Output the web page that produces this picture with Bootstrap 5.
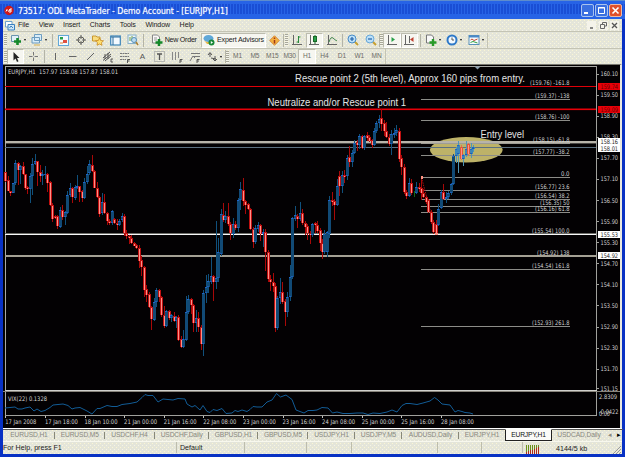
<!DOCTYPE html>
<html lang="en">
<head>
  <meta charset="utf-8">
  <meta name="viewport" content="width=device-width, initial-scale=1">
  <title>ODL MetaTrader</title>
  <link href="https://cdn.jsdelivr.net/npm/bootstrap@5.3.2/dist/css/bootstrap.min.css" rel="stylesheet">
  <style>
    body {
      width: 625px;
      height: 457px;
      overflow: hidden;
      font-family: "Liberation Sans", Arial, sans-serif;
      font-size: 7.1px;
      line-height: 1;
      color: #222;
    }
    svg { display: block; flex: none; }
    .app-window { width: 625px; height: 457px; background: #0831c4; padding: 0 3px 3px; }
    .face {
      background-color: #e4e5d9;
      background-image: radial-gradient(circle at 1.5px 1.5px, #fbf6d2 .6px, transparent .8px), radial-gradient(circle at 3.5px 3.5px, #f6f4e6 .6px, transparent .8px);
      background-size: 4px 4px;
    }

    /* title bar */
    .title-bar {
      height: 19px;
      margin: 0 -3px;
      padding: 2px 3px 0 4px;
      background-color: #2763e6;
      background-image: linear-gradient(#2763e6 3px, transparent 3px, transparent 13px, #2763e6 13px), radial-gradient(circle at 1px 1px, #1243cc .6px, transparent .9px);
      background-size: 100% 100%, 3px 2px;
      border-top: 1px solid #5e8ccc;
      color: #fff;
    }
    .app-name { font: 8.7px "DejaVu Sans Condensed", "DejaVu Sans", sans-serif; text-shadow: 0 0 1px #b8ccf8; letter-spacing: -.06px; margin-left: 4px; white-space: nowrap; }
    .win-btn { width: 13px; height: 13px; border: 1px solid #a9c3ee; border-radius: 2px; background: #3a6fe0; margin-left: 1px; }
    .win-close { background: #e0502a; border-color: #f0b8a0; }

    .menu-row { height: 13px; padding: 0 3px 0 2px; }
    .menu-row .items { gap: 9.6px; margin-left: 3px; }
    .menu-row .items span { letter-spacing: -.1px; }
    .mdi-btn { width: 9px; height: 9px; margin-left: 2.5px; background: #f4f3ea; }

    /* toolbars */
    .tool-row { height: 17px; border-top: 1px solid #c4c4b4; padding-left: 1px; }
    .tool-row.charts { height: 16px; }
    .tool { display: flex; align-items: center; justify-content: center; width: 17.4px; height: 15px; flex: none; white-space: nowrap; }
    .tool.drop { width: 21.5px; gap: 2px; }
    .tool.drop::after { content: ""; border: 1.5px solid transparent; border-top: 2px solid #111; border-bottom: 0; }
    .tool.on { background: #f6f6f0; border: 1px solid #bcbcae; border-right-color: #fff; border-bottom-color: #fff; }
    .tool.order { width: 48px; gap: 1.5px; margin: 0 3px 0 4px; letter-spacing: -.25px; }
    .tool.advisor { width: 65px; gap: 2px; letter-spacing: -.15px; }
    .grip { width: 3px; height: 12px; flex: none; background: repeating-linear-gradient(#a8a898 0 1px, #f4f4ea 1px 2px); }
    .rule { width: 1px; height: 13px; flex: none; background: #b4b4a6; }
    .rule.gap-even { margin: 0 2px; }
    .rule.gap-slim { margin: 0 1.5px; }
    .tf .tool { color: #6c6c66; font-size: 6.6px; letter-spacing: -.1px; }
    .end-rule { width: 1px; height: 15px; background: #c4c4b4; }

    /* chart */
    .chart-area { width: 619px; height: 364px; background: #030103; border-top: 1px solid #77766e; border-right: 2px solid #e8e8e0; }
    .chart-area text { font-family: "DejaVu Sans Condensed", "DejaVu Sans", sans-serif; font-size: 6.3px; fill: #d4d4d4; }
    .chart-area .note { font-family: "Liberation Sans", Arial, sans-serif; font-size: 10px; fill: #e4e4e4; }

    /* chart tabs */
    .chart-tabs { height: 13px; border-top: 1px solid #fff; flex-wrap: nowrap; color: #88887e; }
    .chart-tabs .tab-cell { flex: none; height: 12px; display: flex; align-items: center; justify-content: center; position: relative; font-size: 6.7px; letter-spacing: -.14px; border-top: 1px solid #555; }
    .tab-cell::after { content: ""; position: absolute; right: 0; top: 2px; height: 7px; width: 1px; background: #888878; }
    .tab-cell.current { background: #fbfbf8; color: #111; border: 1px solid #222; border-top-color: #fbfbf8; }
    .tab-cell.current::after, .tab-cell.plain::after { display: none; }
    .status { height: 13px; border-top: 1px solid #f8f8ee; }
    .status .pane { border-left: 1px solid #bdbdac; height: 11px; flex: none; padding: 3px 0 0 3px; }
    .status .pane:first-child { font-size: 7.1px; }
  </style>
</head>
<body>
<div class="app-window d-flex flex-column">
  <div class="title-bar d-flex align-items-center">
    <svg width="10" height="11" viewBox="0 0 10 11"><circle cx="5" cy="5.5" r="4.7" fill="#d01818"/><path d="M2 6.5Q3 3 4 5.5T6 4V8M7 3V7" stroke="#fff" fill="none"/></svg>
    <span class="app-name">73517: ODL MetaTrader - Demo Account - [EURJPY,H1]</span>
    <div class="d-flex ms-auto">
      <div class="win-btn"><svg width="11" height="11"><path d="M2 8H6" stroke="#fff" stroke-width="2"/></svg></div>
      <div class="win-btn"><svg width="11" height="11"><path d="M2.5 2.5H8.5V8.5H2.5ZM2 3H9" stroke="#fff" fill="none"/></svg></div>
      <div class="win-btn win-close"><svg width="11" height="11"><path d="M2.5 2.5L8.5 8.5M8.5 2.5L2.5 8.5" stroke="#fff" stroke-width="1.6"/></svg></div>
    </div>
  </div>

  <div class="menu-row face d-flex align-items-center">
    <svg width="10" height="11" viewBox="0 0 10 11"><path d="M.5 1.5H7V7H.5Z" fill="#fff" stroke="#6aa0cc"/><path d="M3 4.5H9.5V10H3Z" fill="#cfe6f6" stroke="#3a80c0"/><path d="M4.500 8L6 6L8 8" stroke="#3a80c0" fill="none"/></svg>
    <div class="items d-flex">
      <span>File</span><span>View</span><span>Insert</span><span>Charts</span><span>Tools</span><span>Window</span><span>Help</span>
    </div>
    <div class="d-flex ms-auto">
      <div class="mdi-btn"><svg width="9" height="9"><path d="M3 7H6" stroke="#555" stroke-width="1.4"/></svg></div>
      <div class="mdi-btn"><svg width="9" height="9"><path d="M3.500 3V1.500H7.500V5H6M1.500 3.500H5.500V7.500H1.500Z" stroke="#666" fill="none"/></svg></div>
      <div class="mdi-btn"><svg width="9" height="9"><path d="M2 2L7 7M7 2L2 7" stroke="#555" stroke-width="1.300"/></svg></div>
    </div>
  </div>

  <div class="tool-row face d-flex align-items-center">
    <i class="grip"></i>
    <div class="tool drop"><svg width="12" height="12"><path d="M1.500 1.500H8.500V7.500H1.500Z" fill="#e2f0f8" stroke="#6a94ae"/><path d="M7.500 4V11M4 7.500H11" stroke="#14882a" stroke-width="2.600"/></svg></div>
    <div class="tool drop"><svg width="12" height="12"><path d="M3.500 .5H10.500V6.500H3.500ZM1 3.500H8.500V9H1Z" fill="#d8ecf8" stroke="#6c9cc0"/><path d="M3 11H9" stroke="#d8b050"/></svg></div>
    <i class="rule gap-even"></i>
    <div class="tool"><svg width="11" height="11"><rect x=".5" y=".5" width="10" height="10" fill="#f4faff" stroke="#62a8d8"/><rect x="2" y="2" width="3" height="2.500" fill="#28a048"/><rect x="5" y="5" width="4" height="3" fill="#e05040"/><path d="M2 8H5" stroke="#e08030"/></svg></div>
    <div class="tool"><svg width="12" height="12"><circle cx="6" cy="6" r="3" fill="none" stroke="#5c5c58"/><path d="M6 1V11M1 6H11" stroke="#5c5c58"/><circle cx="6" cy="6" r="1.300" fill="#e4e5d9"/></svg></div>
    <div class="tool"><svg width="12" height="12"><path d="M.5 2H4L5 3H8V7H.5Z" fill="#f8dc80" stroke="#c89830"/><path d="M7.500 4L8.700 6.500L11.500 6.800L9.500 8.600L10 11.300L7.500 10L5 11.300L5.500 8.600L3.500 6.800L6.300 6.500Z" fill="#ffe070" stroke="#c88820" stroke-width=".8"/></svg></div>
    <div class="tool"><svg width="11" height="11"><rect x=".7" y="1" width="9.600" height="9" fill="#f4faff" stroke="#3c84b8" stroke-width="1.200"/><path d="M1 2H10M3 2V10" stroke="#2c6c9c"/></svg></div>
    <div class="tool"><svg width="12" height="12"><rect x="1" y="1" width="8" height="8.500" fill="#eef6fa" stroke="#88b0c8"/><path d="M3 7V3M5 6V2" stroke="#70a040"/><circle cx="7" cy="6" r="2.500" fill="#bcdcf0" stroke="#5890b8"/><path d="M9 8L11 11" stroke="#b08030" stroke-width="1.500"/></svg></div>
    <i class="rule gap-slim"></i>
    <div class="tool order"><svg width="12" height="12"><path d="M1.500 1H6.500L8.500 3V9H1.500Z" fill="#f8f8f8" stroke="#888"/><path d="M3 4H6M3 6H6" stroke="#999"/><path d="M8 5V12M4.500 8.500H11.500" stroke="#14882a" stroke-width="2.500"/></svg>New Order</div>
    <div class="tool on advisor"><svg width="12" height="12"><ellipse cx="5.500" cy="4.500" rx="5" ry="3.500" fill="#60a8d8"/><path d="M1 6.500Q5 9.500 9 6.500L7 10H4Z" fill="#e8b848"/><circle cx="8.500" cy="8.500" r="3" fill="#188838"/><path d="M7.800 7L10 8.500L7.800 10Z" fill="#fff"/></svg>Expert Advisors</div>
    <div class="tool"><svg width="11" height="11"><path d="M5.500 .7L10.300 5.500L5.500 10.300L.7 5.500Z" fill="#f4b040" stroke="#d89040"/><path d="M5.500 2.500V4M5.500 5V8.500" stroke="#a03818" stroke-width="1.500"/></svg></div>
    <i class="rule"></i><i class="grip" style="margin-left:1px"></i>
    <div class="tool"><svg width="12" height="12"><path d="M2.500 1V10.500M1 10.500H11" stroke="#666" fill="none"/><path d="M7.500 2V9M5.500 8H7.500M7.500 3H9.500" stroke="#28883c" fill="none"/></svg></div>
    <div class="tool on"><svg width="12" height="12"><path d="M2.500 1V10.500M1 10.500H11" stroke="#666"/><path d="M7 1V10" stroke="#186828"/><rect x="5.500" y="2.500" width="3" height="5" fill="#28a048" stroke="#186828"/></svg></div>
    <div class="tool"><svg width="12" height="12"><path d="M2.500 1V10.500M1 10.500H11" stroke="#666"/><path d="M3 8Q5 2 7 4T11 7" stroke="#468850" fill="none"/></svg></div>
    <i class="rule gap-slim"></i>
    <div class="tool"><svg width="12" height="12"><path d="M7.500 7.500L11 11" stroke="#c8a030" stroke-width="2"/><circle cx="5" cy="5" r="4" fill="#bce0f8" stroke="#488cc8"/><path d="M5 3V7M3 5H7" stroke="#2060a8" stroke-width="1.200"/></svg></div>
    <div class="tool"><svg width="12" height="12"><path d="M7.500 7.500L11 11" stroke="#c8a030" stroke-width="2"/><circle cx="5" cy="5" r="4" fill="#bce0f8" stroke="#68a8d8"/><path d="M3 5H7" stroke="#2060a8" stroke-width="1.200"/></svg></div>
    <i class="rule"></i><i class="grip"></i>
    <div class="tool on"><svg width="12" height="12"><path d="M2.500 1V10.500M1 10.500H11" stroke="#666"/><path d="M5.500 3V8L9 5.500Z" fill="#28a048"/></svg></div>
    <div class="tool on"><svg width="12" height="12"><path d="M2.500 1V10.500M1 10.500H11M6.500 2V9" stroke="#666"/><path d="M10.500 3V8L7 5.500Z" fill="#c04030"/></svg></div>
    <i class="rule gap-slim"></i>
    <div class="tool drop"><svg width="12" height="12"><path d="M1.500 1H6.500L8.500 3V9H1.500Z" fill="#f8f8f8" stroke="#777"/><path d="M8 5V12M4.500 8.500H11.500" stroke="#289a28" stroke-width="2.400"/></svg></div>
    <div class="tool drop"><svg width="12" height="12"><circle cx="6" cy="6" r="4.500" fill="#f0f8ff" stroke="#2c78c8" stroke-width="2"/><path d="M6 3.500V6H8" stroke="#555" fill="none"/></svg></div>
    <div class="tool drop"><svg width="12" height="12"><rect x="1" y="1.500" width="10" height="9" fill="#f8fcff" stroke="#5890b8"/><path d="M1 2.500H11" stroke="#4888c8" stroke-width="2"/><path d="M2.500 6L4 5L6 6.500L9.500 5" stroke="#c04830" fill="none"/><path d="M2.500 8.500L5 7.500L9.500 9" stroke="#30a040" fill="none"/></svg></div>
    <i class="end-rule"></i>
  </div>

  <div class="tool-row charts face d-flex align-items-center">
    <i class="grip"></i>
    <div class="tool on"><svg width="11" height="12"><path d="M3.500 1V9.500L5.500 7.500L7 11L8.500 10.300L7 7H9.500Z" fill="#222"/></svg></div>
    <div class="tool"><svg width="11" height="11"><path d="M5.500 1V4.500M5.500 6.500V10M1 5.500H4.500M6.500 5.500H10" stroke="#777"/></svg></div>
    <i class="rule gap-even"></i>
    <div class="tool"><svg width="11" height="11"><path d="M5.500 2V9" stroke="#666"/></svg></div>
    <div class="tool"><svg width="11" height="11"><path d="M2 5.500H9.500" stroke="#666"/></svg></div>
    <div class="tool"><svg width="11" height="11"><path d="M2 9L9 2" stroke="#666"/></svg></div>
    <div class="tool"><svg width="12" height="12"><path d="M1 7L8 1M1 9.500L9 3M3 10L9 5M3 3V8M6 2V8" stroke="#555"/><path d="M11 8H9V11H11" stroke="#555" fill="none"/></svg></div>
    <div class="tool"><svg width="12" height="12"><path d="M1 2.500H10M1 5.500H10M1 8.500H7" stroke="#777" stroke-dasharray="2 .5"/><path d="M8.500 12V8.500H11M8.500 10H10.500" stroke="#555" fill="none"/></svg></div>
    <div class="tool"><span style="font-size:8px;color:#555">A</span></div>
    <div class="tool"><svg width="11" height="11"><path d="M.5 .5H10.500V10.500H.5Z" stroke="#888" stroke-dasharray="1 1" fill="none"/><path d="M3 3H8M5.500 3V9" stroke="#555" stroke-width="1.300"/></svg></div>
    <div class="tool"><svg width="12" height="12"><path d="M1.500 1V9M4.500 1V9M7.500 1V7" stroke="#888"/><path d="M9 12V8.500H11.500M9 10H11" stroke="#555" fill="none"/></svg></div>
    <div class="tool"><svg width="12" height="12"><path d="M2 2.500H11M4 5.500H11M1 10L4 5L6 7" stroke="#777" fill="none"/><path d="M8 12V8.500H10.500M8 10H10" stroke="#555" fill="none"/></svg></div>
    <div class="tool drop"><svg width="11" height="11"><path d="M3 6V2M1 4L3 1.500L5 4M4 7L9 8M8 5V10M6 8L8 10L10 8" stroke="#555" fill="none"/></svg></div>
    <i class="rule"></i><i class="grip"></i>
    <div class="tf d-flex">
      <div class="tool">M1</div><div class="tool">M5</div><div class="tool">M15</div><div class="tool">M30</div><div class="tool on">H1</div><div class="tool">H4</div><div class="tool">D1</div><div class="tool">W1</div><div class="tool">MN</div>
    </div>
    <i class="end-rule"></i>
  </div>

  <div class="chart-area">
    <svg id="chart" width="617" height="363" viewBox="3 66 617 363"></svg>
  </div>

  <div class="chart-tabs face d-flex" id="tabs"></div>

  <div class="status face d-flex">
    <div class="pane border-0 ps-0" style="width:173px">For Help, press F1</div>
    <div class="pane" style="width:68px">Default</div>
    <div class="pane" style="width:62px"></div>
    <div class="pane" style="width:45px"></div>
    <div class="pane" style="width:86px"></div>
    <div class="pane" style="width:44px"></div>
    <div class="pane" style="width:41px"></div>
    <div class="pane d-flex pt-1 align-items-center flex-grow-1">
      <svg width="15" height="9" id="traffic"></svg>
      <span style="margin-left:15px">4144/5 kb</span>
      <svg class="ms-auto" width="10" height="11"><path d="M1 10L9 2M4 10L9 5M7 10L9 8" stroke="#999"/></svg>
    </div>
  </div>
</div>

<script src="https://cdn.jsdelivr.net/npm/bootstrap@5.3.2/dist/js/bootstrap.bundle.min.js"></script>
<script>
  // bars: high, open, close, low (pixel rows); close below open on screen = falling bar
  const bars = [
    [173,173,182,183],[177,181,192,192],[192,192,194,197],[184,194,184,194],[161,184,164,186],[163,164,171,186],[166,171,167,185],[163,167,175,176],
    [175,175,189,191],[187,188,190,195],[174,190,177,204],[159,177,165,196],[155,165,162,166],[162,162,173,187],[166,173,177,183],[171,177,175,186],
    [167,176,175,180],[174,175,184,193],[182,183,206,207],[204,206,220,223],[216,217,219,220],[216,217,227,230],[208,228,211,229],[206,211,218,221],
    [212,218,213,226],[192,214,196,215],[184,196,189,198],[188,189,198,204],[186,199,188,201],[176,189,187,190],[187,187,193,203],[191,192,199,203],
    [179,199,183,200],[167,183,175,185],[161,174,165,176],[156,166,172,173],[171,172,189,189],[183,189,198,199],[197,198,215,218],[194,214,203,216],
    [195,203,214,215],[213,214,222,226],[220,222,224,226],[211,224,212,226],[219,220,224,225],[220,224,226,231],[220,226,222,227],[214,221,217,223],
    [215,217,234,237],[231,234,237,240],[236,237,239,245],[236,239,244,245],[243,244,247,247],[245,246,249,250],[246,249,262,269],[257,261,268,277],
    [267,268,291,298],[286,290,296,303],[293,295,308,309],[307,308,320,331],[299,321,303,322],[289,303,291,308],[290,291,298,303],[297,298,316,318],
    [307,316,327,329],[311,327,312,328],[311,312,319,321],[315,319,316,323],[313,317,322,323],[317,322,318,329],[316,318,341,342],[337,340,348,349],
    [331,348,340,349],[297,341,313,342],[296,313,300,315],[299,300,306,315],[305,306,324,333],[311,324,319,333],[313,319,328,333],[326,328,345,351],
    [291,345,294,357],[276,294,288,304],[275,288,282,294],[258,283,277,285],[276,277,283,302],[222,283,279,290],[239,279,253,283],[210,255,215,257],
    [204,216,221,223],[212,221,217,224],[204,217,225,227],[223,225,234,241],[219,235,225,239],[222,225,229,231],[199,229,201,233],[183,201,190,211],
    [179,191,202,207],[201,202,206,215],[204,205,210,211],[209,210,230,231],[228,230,243,249],[226,243,229,245],[223,230,226,233],[225,226,235,242],
    [230,235,233,248],[230,233,253,272],[251,253,280,283],[276,280,283,292],[274,283,287,293],[284,287,329,333],[297,329,299,331],[279,299,293,305],
    [283,293,303,305],[300,302,313,327],[293,313,298,318],[266,298,278,302],[218,278,219,280],[207,220,216,222],[215,217,220,229],[203,220,214,222],
    [210,214,224,226],[222,224,228,236],[225,227,234,241],[232,234,236,245],[224,236,225,238],[223,224,226,234],[222,226,232,234],[229,231,244,252],
    [240,244,253,260],[231,253,235,255],[232,253,233,258],[197,235,201,239],[193,201,203,207],[200,202,206,221],[180,206,187,207],[172,177,187,197],
    [172,187,176,194],[171,176,178,184],[156,177,159,181],[147,158,163,168],[151,163,154,168],[141,154,144,155],[141,143,146,152],[135,146,137,150],
    [136,137,149,150],[136,149,137,151],[133,136,139,142],[136,138,142,143],[140,141,146,149],[129,146,132,147],[122,132,124,134],[116,124,120,129],
    [110,119,125,132],[121,124,132,137],[123,132,138,139],[135,138,145,147],[131,145,135,156],[129,136,134,139],[126,134,131,137],[129,132,160,163],
    [156,159,168,176],[165,168,193,195],[191,193,197,200],[179,197,184,198],[180,184,194,196],[192,195,195,198],[183,194,188,195],[184,188,190,193],
    [178,189,194,201],[190,194,198,199],[197,198,203,205],[200,201,213,214],[211,213,223,225],[221,223,233,235],[221,225,235,236],[205,226,210,227],
    [191,209,193,210],[185,193,200,201],[193,200,198,204],[192,198,194,200],[184,194,185,196],[155,185,157,186],[148,157,150,164],[142,155,146,174],
    [146,148,160,161],[155,160,156,167],[142,156,150,158],[144,145,155,157],[144,155,150,159],[146,150,148,153]
  ];

  // levels drawn across the whole chart: y, colour, height
  const levels = [
    [87, '#e00008', 1], [109.5, '#e80008', 1.6], [142, '#b8b4aa', 2.4], [148, '#5c7080', 1],
    [234, '#6c6c68', 1], [235, '#f8f8f8', 1], [256, '#a4a094', 2]
  ];

  // retracement: line y, label, label left x
  const fibo = [
    [87, '(159.76) -161.8', 530], [100, '(159.37) -138', 535], [121, '(158.76) -100', 535], [144, '(158.15) -61.8', 533],
    [156, '(157.77) -38.2', 533], [178, '0.0', 561], [191, '(156.77) 23.6', 535], [200, '(156.54) 38.2', 535],
    [207, '(156.35) 50', 540], [213, '(156.16) 61.8', 535], [235, '(155.54) 100.0', 532], [257, '(154.92) 138', 537],
    [270, '(154.54) 161.8', 532], [327, '(152.93) 261.8', 532]
  ];

  const rect = (x, y, w, h, fill) => `<rect x="${x}" y="${y}" width="${w}" height="${h}" fill="${fill}" shape-rendering="crispEdges"/>`;
  const text = (x, y, w, str, extra = '') => `<text x="${x}" y="${y}" textLength="${w}" lengthAdjust="spacingAndGlyphs" ${extra}>${str}</text>`;

  let out = '';

  // frame of main and indicator windows
  out += rect(5, 67, 592, 1, '#a8a8a4') + rect(5, 67, 1, 350, '#a8a8a4') + rect(596, 67, 1, 350, '#a0a09c');
  out += rect(5, 391, 592, 1, '#d0d0cc') + rect(3, 392, 617, 1, '#88847c') + rect(5, 416, 592, 1, '#a0a09c');
  out += '<path d="M474.500 67.500H480.500L477.500 70.500Z" fill="#8ca0b0"/>';
  out += '<ellipse cx="466.300" cy="150.800" rx="36.400" ry="12.700" fill="#bdb268"/>';

  fibo.forEach(([y]) => { out += rect(421, y, 149, 1, '#8c8c88'); });
  levels.forEach(([y, color, h]) => { out += `<rect x="5" y="${y}" width="591" height="${h}" fill="${color}"/>`; });
  out += '<path d="M421.500 178.500L436.500 235.500" stroke="#b01010" stroke-dasharray="1.500 1"/>';

  bars.forEach(([high, open, close, low], i) => {
    const x = Math.round(5.2 + 2.475 * i);
    const down = close > open;
    const lit = i > 181;
    const doji = close === open;
    const wick = doji ? '#106818' : down ? (lit ? '#e07050' : '#a80808') : (lit ? '#5096b4' : '#10507c');
    const top = Math.min(open, close);
    const h = Math.max(1, Math.abs(open - close));
    out += rect(x, high, 1, Math.max(1, low - high), wick);
    if (doji) return;
    if (down) {
      out += rect(x - 1, top, 3, h, lit ? '#e05838' : '#c01010') + rect(x, top + 1, 1, Math.max(0, h - 1), '#ff9088');
    } else {
      out += rect(x - 1, top, 3, h, lit ? '#3c86b8' : '#114a76') + rect(x - 1, top, 2, 1, '#1e64c8') + rect(x - 1, top + h - 1, 2, 1, '#1c5cb8');
    }
  });
  out += rect(421, 177, 2, 3, '#ff9080') + rect(435, 234, 3, 2, '#ff9080');

  fibo.forEach(([y, label, x]) => { out += text(x, y - 1.5, 569.5 - x, label); });
  out += text(8, 75, 110, 'EURJPY,H1&#160; 157.97 158.08 157.87 158.01');
  out += text(295, 83, 230, 'Rescue point 2 (5th level), Approx 160 pips from entry.', 'class="note"');
  out += text(267.5, 107, 138.5, 'Neutralize and/or Rescue point 1', 'class="note"');
  out += text(480.5, 139, 43.5, 'Entry level', 'class="note"');

  // price axis
  for (let i = 0; i < 15; i++) {
    const y = 74.7 + 21.07 * i;
    out += rect(597, Math.round(y), 2, 1, '#a0a09c') + text(600.5, y + 2.4, 17.5, (160.1 - 0.6 * i).toFixed(2));
  }
  out += rect(597, 389, 2, 1, '#a0a09c') + text(600.5, 391.7, 17.5, '151.15');
  [[84, '159.74', 1], [107, '159.09', 1], [146, '158.01', 0], [139, '158.16', 0], [232, '155.53', 0], [253, '154.92', 0]].forEach(([y, label, red]) => {
    out += rect(598, y, 22, 7, red ? '#e80008' : '#fff') + text(600.5, y + 5.8, 17.5, label, `style="fill:${red ? '#600' : '#222'}"`);
  });

  // indicator window
  const vix = [[5,409],[10,408.5],[15,408],[18,410],[22,410],[25,409],[30,408],[34,412],[37,410],[41,412.500],[45,411.500],[50,408.500],[53,406],[58,405.500],[63,405],[68,406.500],[72,410],[75,409],[80,408.500],[83,410],[87,412],[92,415],[97,409.500],[100,409.500],[107,406.500],[112,407.500],[117,407.500],[122,405.500],[130,404.500],[137,403],[142,398.500],[145,395.500],[148,396.500],[153,396.500],[158,403],[163,400],[168,400.500],[173,401],[178,399.500],[185,400],[187,405],[192,408],[195,406.500],[200,411],[203,406.500],[207,412.500],[210,413.500],[213,410.500],[217,411.500],[222,409.500],[226,414.500],[232,414],[235,411.500],[238,412.500],[242,411],[247,412.500],[250,410.500],[253,407.500],[257,408],[262,408],[267,403],[272,401],[276.500,394.500],[280.500,398],[286,396],[292,400.500],[296,411],[300,412.500],[304,414],[308,411.500],[313,411.500],[317,411],[322,408.500],[328,409],[332.500,414],[337,413],[343,414.500],[350,414.500],[357,414],[363,414],[368,415.500],[373,414],[380,414.500],[387,413],[392,411],[397,413],[402,406.500],[406,404.500],[410,404.500],[417,405.500],[423,404],[430,402],[434.500,398.500],[438,401],[442,405],[450,406],[455,413],[458,411.500],[462,412.500],[465,413.500],[470,414],[473,415]];
  out += `<polyline points="${vix.join(' ')}" fill="none" stroke="#125c96"/>`;
  out += text(8, 401.5, 39, 'VIX(22) 0.1328') + text(599, 399.5, 18, '2.8309') + text(599, 414.5, 19.5, '-0.0422') + text(599, 416.8, 11, '0.00');

  // time axis
  ['17 Jan 2008','17 Jan 18:00','18 Jan 10:00','21 Jan 00:00','21 Jan 16:00','22 Jan 08:00','23 Jan 00:00','23 Jan 16:00','24 Jan 08:00','25 Jan 00:00','25 Jan 16:00','28 Jan 08:00'].forEach((label, i) => {
    const x = 5.3 + 39.6 * i;
    out += rect(Math.round(x), 417, 1, 2, '#c0c0bc') + text(x, 425, i ? 33 : 31, label);
  });
  document.getElementById('chart').innerHTML = out;

  // tabs with the width of each cell
  const tabs = [['EURUSD,H1', 52], ['EURUSD,M5', 49.5], ['USDCHF,H4', 50], ['USDCHF,Daily', 54.5], ['GBPUSD,H1', 49], ['GBPUSD,M5', 50], ['USDJPY,H1', 47], ['USDJPY,M5', 47], ['AUDUSD,Daily', 57], ['EURJPY,H1', 46, 'plain'], ['EURJPY,H1', 47, 'current'], ['USDCAD,Daily', 54, 'plain'], ['◂', 8, 'plain'], ['▸', 9, 'plain text-black']];
  document.getElementById('tabs').innerHTML = tabs.map(([name, w, cls = '']) => `<div class="tab-cell ${cls}" style="width:${w}px">${name}</div>`).join('');

  let traffic = '';
  for (let i = 0; i < 7; i++) {
    traffic += rect(i * 2, 0, 1, 7 - i * .8, '#6a9018') + rect(i * 2, 7 - i * .8, 1, 2 + i * .8, '#b02818');
  }
  document.getElementById('traffic').innerHTML = traffic;
</script>
</body>
</html>
